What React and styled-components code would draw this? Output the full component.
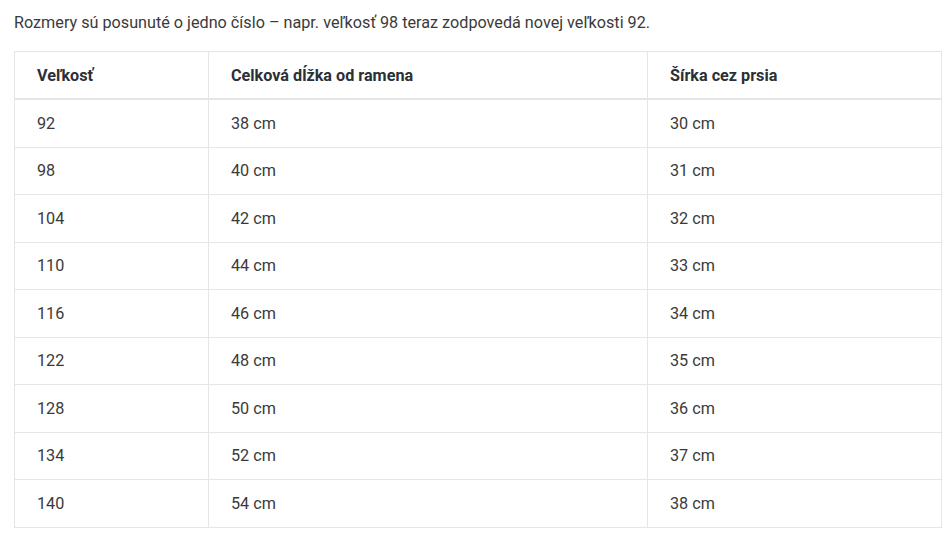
import React from 'react';
import styled, { createGlobalStyle } from 'styled-components';

const GlobalStyle = createGlobalStyle`
    body {
        margin: 0;
        background: #fff;
        font-family: Roboto, "Liberation Sans", sans-serif;
        color: #3a3a3a;
    }
`
const Wrapper = styled.div`
    padding: 11px 9px 0 14px;
`
const Note = styled.p`
    margin: 0 0 16px;
    font-size: 16.2px;
    line-height: 24px;
`
const Table = styled.table`
    width: 927px;
    table-layout: fixed;
    border-collapse: collapse;
    border: 1px solid #e6e6e6;
    font-size: 16.2px;
    line-height: 24px;
`
const Col = styled.col`
    width: ${p => p.$w}px;
`
const Th = styled.th`
    text-align: left;
    font-weight: 700;
    color: #2b3036;
    padding: 12px 22px 10px 22px;
    border: 1px solid #e6e6e6;
    border-bottom: 2px solid #e6e6e6;
`
const Td = styled.td`
    padding: 11.5px 22px 11px;
    border: 1px solid #e6e6e6;
`

const rows = [
    [92, 38, 30],
    [98, 40, 31],
    [104, 42, 32],
    [110, 44, 33],
    [116, 46, 34],
    [122, 48, 35],
    [128, 50, 36],
    [134, 52, 37],
    [140, 54, 38],
]

const App = () => {
    return (
        <Wrapper>
            <GlobalStyle/>
            <Note>Rozmery sú posunuté o jedno číslo – napr. veľkosť 98 teraz zodpovedá novej veľkosti 92.</Note>
            <Table>
                <colgroup>
                    <Col $w={194}/>
                    <Col $w={439}/>
                    <Col $w={294}/>
                </colgroup>
                <thead>
                    <tr>
                        <Th>Veľkosť</Th>
                        <Th>Celková dĺžka od ramena</Th>
                        <Th>Šírka cez prsia</Th>
                    </tr>
                </thead>
                <tbody>
                    {rows.map(([size, len, width]) => (
                        <tr key={size}>
                            <Td>{size}</Td>
                            <Td>{len} cm</Td>
                            <Td>{width} cm</Td>
                        </tr>
                    ))}
                </tbody>
            </Table>
        </Wrapper>
    )
}

export default App
